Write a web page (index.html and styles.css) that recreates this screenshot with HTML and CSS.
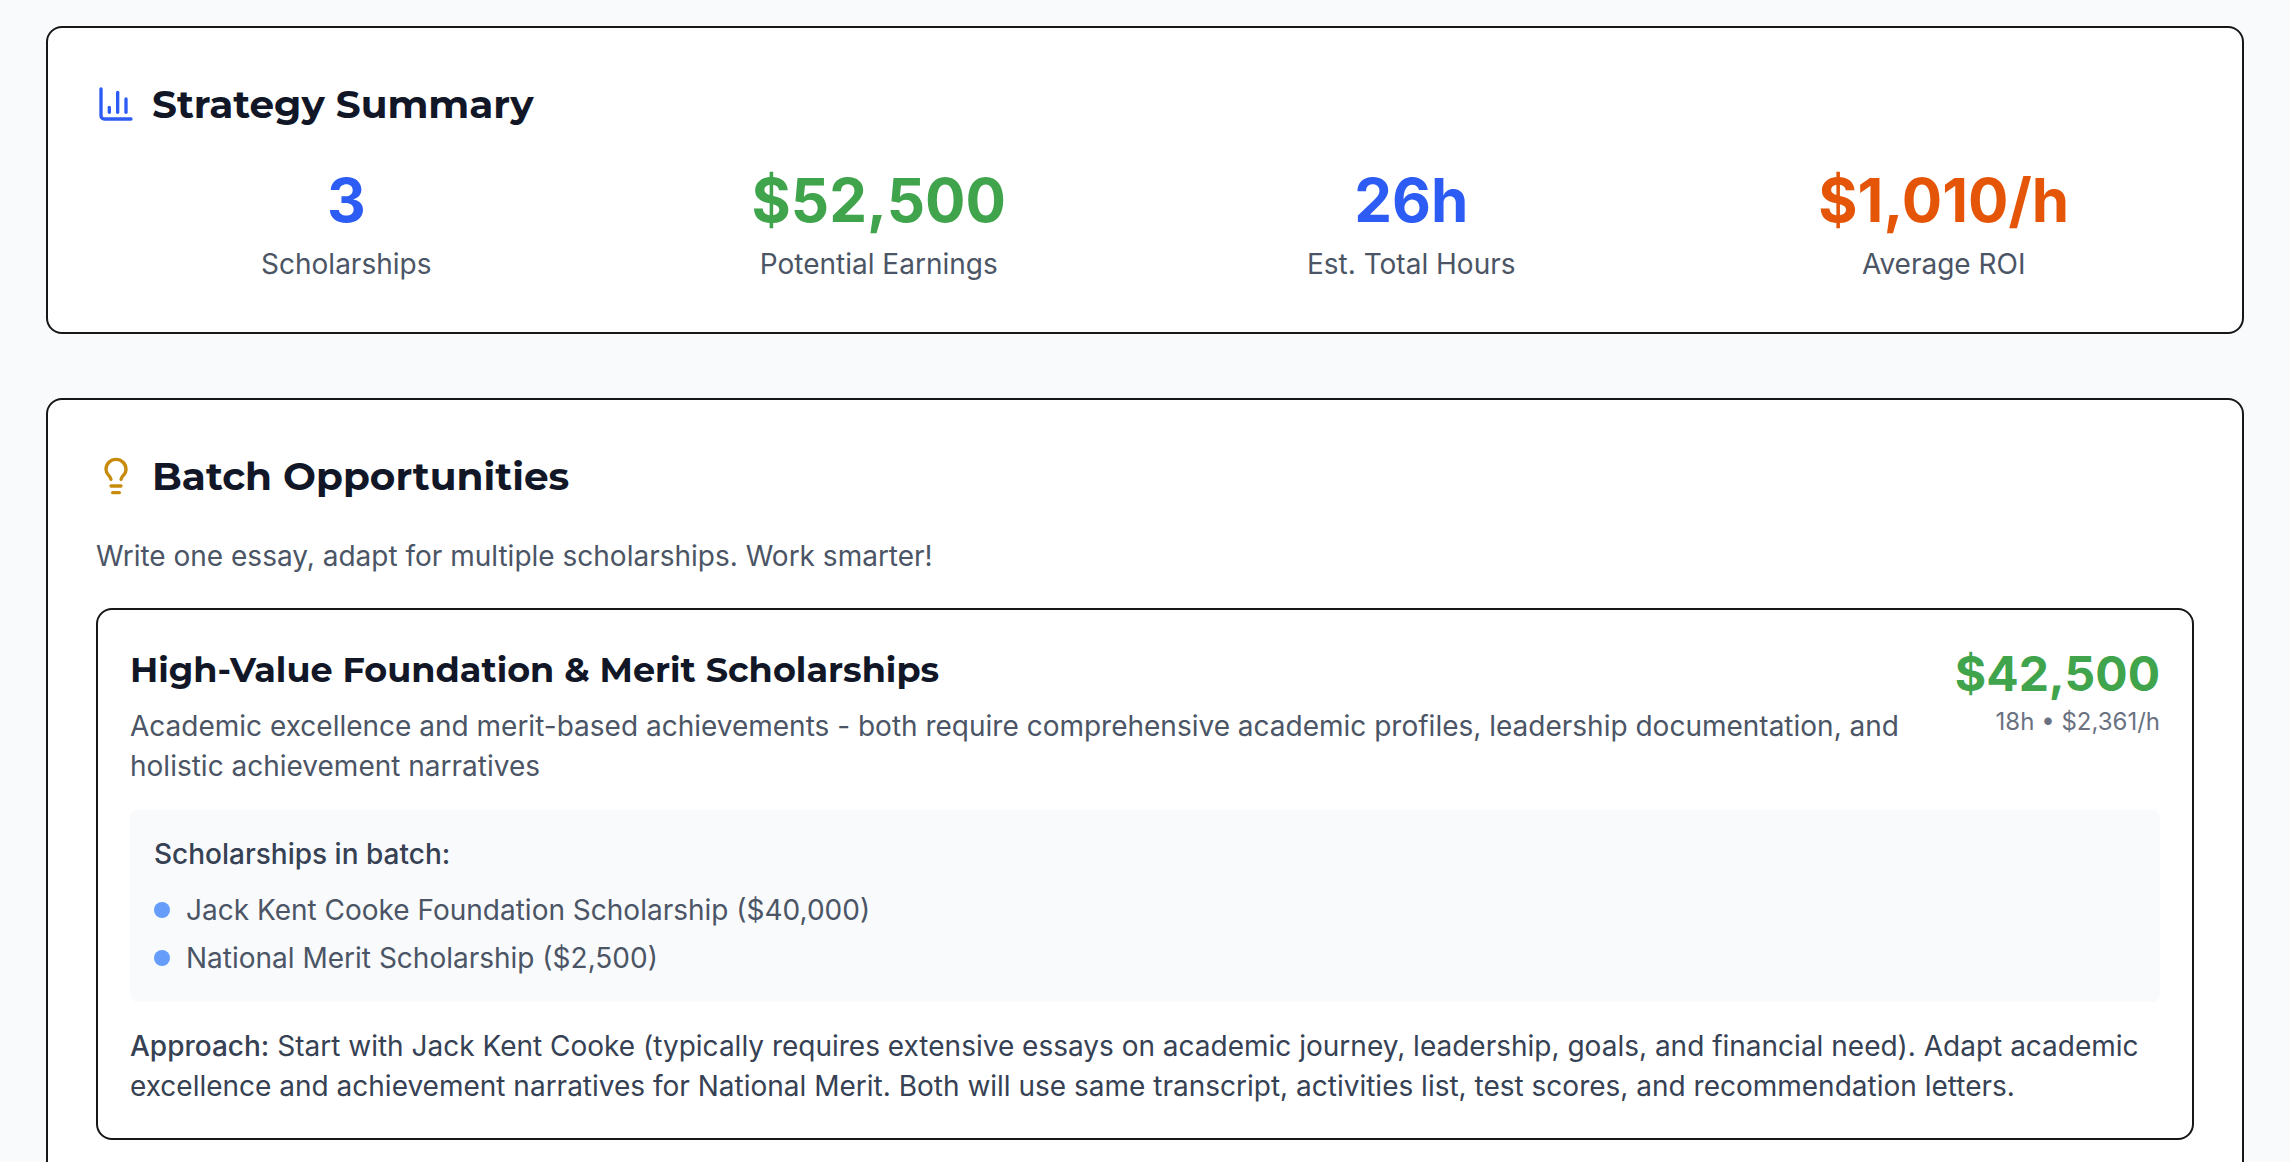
FILE: index.html
```html
<!DOCTYPE html>
<html lang="en">
<head>
  <meta charset="UTF-8" />
  <meta name="viewport" content="width=device-width, initial-scale=1.0"/>
  <title>Scholarship Strategy</title>
  <link rel="stylesheet" href="styles.css">
</head>
<body>
  <main class="page">
    <section class="card">
      <div class="card-title">
        <svg class="icon icon-blue" viewBox="0 0 24 24" aria-hidden="true">
          <path d="M3 3v16a2 2 0 0 0 2 2h16"/>
          <path d="M18 17V9"/>
          <path d="M13 17V5"/>
          <path d="M8 17v-3"/>
        </svg>
        <h2>Strategy Summary</h2>
      </div>

      <div class="stats">
        <div class="stat">
          <p class="value blue">3</p>
          <p class="label">Scholarships</p>
        </div>
        <div class="stat">
          <p class="value green">$52,500</p>
          <p class="label">Potential Earnings</p>
        </div>
        <div class="stat">
          <p class="value blue">26h</p>
          <p class="label">Est. Total Hours</p>
        </div>
        <div class="stat">
          <p class="value orange">$1,010/h</p>
          <p class="label">Average ROI</p>
        </div>
      </div>
    </section>

    <section class="card">
      <div class="card-title">
        <svg class="icon icon-yellow" viewBox="0 0 24 24" aria-hidden="true">
          <path d="M15 14c.2-1 .7-1.7 1.5-2.5 1-.9 1.5-2.2 1.5-3.5A6 6 0 0 0 6 8c0 1 .2 2.2 1.5 3.5.7.7 1.3 1.5 1.5 2.5"/>
          <path d="M9 18h6"/>
          <path d="M10 22h4"/>
        </svg>
        <h2>Batch Opportunities</h2>
      </div>
      <p class="intro">Write one essay, adapt for multiple scholarships. Work smarter!</p>

      <article class="batch">
        <div class="batch-top">
          <div class="batch-info">
            <h3>High-Value Foundation &amp; Merit Scholarships</h3>
            <p>Academic excellence and merit-based achievements - both require comprehensive academic profiles, leadership documentation, and holistic achievement narratives</p>
          </div>
          <div class="batch-total">
            <p class="amount green">$42,500</p>
            <p class="rate">18h • $2,361/h</p>
          </div>
        </div>

        <div class="batch-list">
          <h4>Scholarships in batch:</h4>
          <ul>
            <li>Jack Kent Cooke Foundation Scholarship ($40,000)</li>
            <li>National Merit Scholarship ($2,500)</li>
          </ul>
        </div>

        <p class="approach"><strong>Approach:</strong> Start with Jack Kent Cooke (typically requires extensive essays on academic journey, leadership, goals, and financial need). Adapt academic excellence and achievement narratives for National Merit. Both will use same transcript, activities list, test scores, and recommendation letters.</p>
      </article>
    </section>
  </main>
</body>
</html>
```

FILE: styles.css
```css
* {
  margin: 0;
  padding: 0;
  box-sizing: border-box;
}

body {
  height: 100vh;
  overflow: hidden;
  background: #f9fafc;
  color: #4b5565;
  font-family: 'Inter', sans-serif;
  font-size: 28px;
  line-height: 40px;
}

.page {
  display: flex;
  flex-direction: column;
  gap: 64px;
  padding: 26px 46px;
}

.card {
  background: #fff;
  border: 2px solid #171717;
  border-radius: 16px;
  padding: 48px;
}

.card-title {
  display: flex;
  align-items: center;
  gap: 16px;
  margin-bottom: 32px;
}

h2, h3 {
  font-family: 'Montserrat', 'Inter', sans-serif;
  font-weight: 700;
  line-height: 56px;
  color: #121728;
}

h2 {
  font-size: 39px;
}

h3 {
  font-size: 35px;
}

.icon {
  width: 40px;
  height: 40px;
  fill: none;
  stroke-width: 2;
  stroke-linecap: round;
  stroke-linejoin: round;
}

.icon-blue {
  stroke: #2d5cf4;
}

.icon-yellow {
  stroke: #c78b0c;
}

.blue {
  color: #2d5cf4;
}

.green {
  color: #3fa44b;
}

.orange {
  color: #e45508;
}

.stats {
  display: grid;
  grid-template-columns: repeat(4, 1fr);
  gap: 32px;
  text-align: center;
}

.value {
  font-size: 60px;
  font-weight: 700;
  line-height: 72px;
  margin-bottom: 8px;
}

.intro {
  margin-bottom: 32px;
}

.batch {
  border: 2px solid #171717;
  border-radius: 16px;
  padding: 32px;
}

.batch-top {
  display: flex;
  gap: 32px;
}

.batch-info {
  flex: 1;
}

.batch-info h3 {
  margin-bottom: 8px;
}

.batch-total {
  text-align: right;
}

.amount {
  font-size: 48px;
  font-weight: 700;
  line-height: 64px;
}

.rate {
  font-size: 24px;
  line-height: 32px;
  color: #6a7282;
}

.batch-list {
  margin: 24px 0;
  padding: 24px;
  background: #f9fafc;
  border-radius: 8px;
}

.batch-list h4 {
  margin-bottom: 16px;
  font-size: 28px;
  font-weight: 500;
  color: #364153;
}

.batch-list ul {
  display: flex;
  flex-direction: column;
  gap: 8px;
  list-style: none;
}

.batch-list li {
  display: flex;
  align-items: center;
  gap: 16px;
}

.batch-list li::before {
  content: "";
  width: 16px;
  height: 16px;
  border-radius: 50%;
  background: #669dfa;
}

.approach {
  color: #364153;
}

.approach strong {
  font-weight: 500;
}
```
